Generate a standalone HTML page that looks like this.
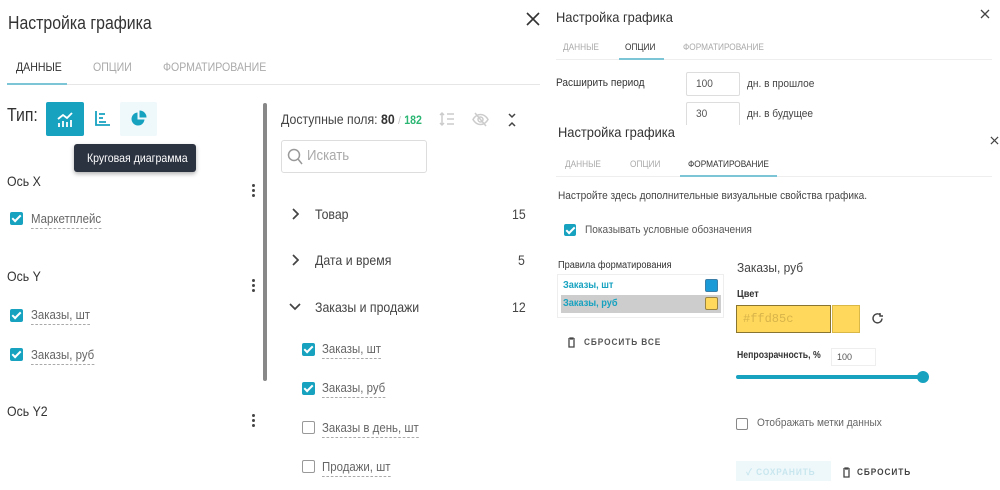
<!DOCTYPE html>
<html><head><meta charset="utf-8">
<style>
*{margin:0;padding:0;box-sizing:border-box}
body{width:1000px;height:490px;background:#fff;position:relative;overflow:hidden;font-family:"Liberation Sans","Noto Sans CJK SC",sans-serif;color:#333}
.a{position:absolute;white-space:nowrap;line-height:1}
.cb{position:absolute;width:13px;height:13px;border-radius:2px;background:#17a2c0}
.cb::after{content:"";position:absolute;left:4px;top:1px;width:3px;height:7px;border:solid #fff;border-width:0 2px 2px 0;transform:rotate(45deg)}
.ub{position:absolute;width:13px;height:13px;border-radius:2px;border:1.5px solid #999;background:#fff}
.dl{border-bottom:1px dashed #aaa;padding-bottom:3px;color:#666}
.dots{position:absolute;width:3px}
.dots i{display:block;width:3px;height:3px;border-radius:50%;background:#444;margin-bottom:2px}
.sx{transform:scaleX(.88);transform-origin:left center}
.sr{transform:scaleX(.92);transform-origin:left center}
</style></head><body>

<!-- LEFT PANEL -->
<div class="a sx" style="left:8px;top:14px;font-size:18px;color:#333">Настройка графика</div>
<svg class="a" style="left:526px;top:12px" width="14" height="14" viewBox="0 0 14 14" stroke="#333" stroke-width="1.6"><path d="M1 1l12 12M13 1L1 13"/></svg>
<div class="a sx" style="left:16px;top:61px;font-size:12px;color:#333">ДАННЫЕ</div>
<div class="a sx" style="left:93px;top:61px;font-size:12px;color:#aaa">ОПЦИИ</div>
<div class="a sx" style="left:163px;top:61px;font-size:12px;color:#aaa">ФОРМАТИРОВАНИЕ</div>
<div class="a" style="left:7px;top:84px;width:533px;height:1px;background:#e6e6e6"></div>
<div class="a" style="left:7px;top:83px;width:60px;height:2px;background:#7cc5d6"></div>

<div class="a sx" style="left:7px;top:106px;font-size:18px;color:#333">Тип:</div>
<div class="a" style="left:46px;top:102px;width:38px;height:34px;background:#17a2c0;border-radius:2px"></div>
<svg class="a" style="left:56px;top:110px" width="18" height="18" viewBox="0 0 18 18" fill="none" stroke="#fff" stroke-width="1.8"><path d="M2 9l5-4 4 3 5-5"/><path d="M3 17v-4M7 17v-6M11 17v-5M15 17v-7"/></svg>
<svg class="a" style="left:94px;top:110px" width="17" height="17" viewBox="0 0 17 17" fill="none" stroke="#17a2c0" stroke-width="1.8"><path d="M2 1v14h14"/><path d="M5 4h6M5 8h4M5 12h7"/></svg>
<div class="a" style="left:120px;top:102px;width:37px;height:34px;background:#eff8fb;border-radius:2px"></div>
<svg class="a" style="left:130px;top:110px" width="17" height="17" viewBox="0 0 17 17"><path d="M7.5 2.5A6.5 6.5 0 1 0 14.5 9.5H7.5z" fill="#17a2c0"/><path d="M9.5 0.5V7.5H16.5A7 7 0 0 0 9.5 0.5z" fill="#17a2c0"/></svg>
<div class="a" style="left:74px;top:144px;width:122px;height:28px;background:#2b3240;border-radius:3px;box-shadow:0 2px 4px rgba(0,0,0,.3)"></div>
<div class="a sx" style="left:87px;top:152px;font-size:12px;color:#fff">Круговая диаграмма</div>

<div class="a sx" style="left:7px;top:174px;font-size:14px">Ось X</div>
<div class="dots" style="left:252px;top:184px"><i></i><i></i><i></i></div>
<div class="cb" style="left:10px;top:212px"></div>
<div class="a sx dl" style="left:31px;top:212px;font-size:13px">Маркетплейс</div>

<div class="a sx" style="left:7px;top:269px;font-size:14px">Ось Y</div>
<div class="dots" style="left:252px;top:279px"><i></i><i></i><i></i></div>
<div class="cb" style="left:10px;top:309px"></div>
<div class="a sx dl" style="left:31px;top:308px;font-size:13px">Заказы, шт</div>
<div class="cb" style="left:10px;top:348px"></div>
<div class="a sx dl" style="left:31px;top:348px;font-size:13px">Заказы, руб</div>

<div class="a sx" style="left:7px;top:404px;font-size:14px">Ось Y2</div>
<div class="dots" style="left:252px;top:414px"><i></i><i></i><i></i></div>

<div class="a" style="left:263px;top:103px;width:4px;height:278px;background:#888;border-radius:2px"></div>

<div class="a sx" style="left:281px;top:112px;font-size:14px;color:#444">Доступные поля: <b style="color:#333">80</b> <span style="color:#bbb;font-size:11px">/</span> <b style="color:#2bb673;font-size:12px">182</b></div>
<svg class="a" style="left:439px;top:111px" width="16" height="16" viewBox="0 0 16 16" fill="none" stroke="#ccc" stroke-width="1.5"><path d="M3 2v12M1 4l2-2 2 2M1 12l2 2 2-2M8 3h7M8 8h7M8 13h7"/></svg>
<svg class="a" style="left:472px;top:111px" width="17" height="17" viewBox="0 0 17 17" fill="none" stroke="#ccc" stroke-width="1.5"><path d="M1 8.5C3 5 6 3.5 8.5 3.5S14 5 16 8.5C14 12 11 13.5 8.5 13.5S3 12 1 8.5z"/><circle cx="8.5" cy="8.5" r="2.5"/><path d="M3 2l11 13"/></svg>
<svg class="a" style="left:507px;top:112px" width="10" height="16" viewBox="0 0 10 16" fill="none" stroke="#444" stroke-width="1.5"><path d="M2 2l3 3 3-3M2 14l3-3 3 3"/></svg>
<div class="a" style="left:281px;top:140px;width:146px;height:33px;border:1px solid #ddd;border-radius:3px"></div>
<svg class="a" style="left:287px;top:148px" width="16" height="17" viewBox="0 0 16 17" fill="none" stroke="#999" stroke-width="1.5"><circle cx="7" cy="7" r="5.5"/><path d="M11 11l4 5"/></svg>
<div class="a sx" style="left:307px;top:148px;font-size:15px;color:#aaa">Искать</div>

<svg class="a" style="left:291px;top:208px" width="8" height="12" viewBox="0 0 8 12" fill="none" stroke="#444" stroke-width="1.7"><path d="M2 1l5 5-5 5"/></svg>
<div class="a sx" style="left:315px;top:207px;font-size:14px;color:#444">Товар</div>
<div class="a sx" style="left:512px;top:207px;font-size:14px;color:#444">15</div>
<svg class="a" style="left:291px;top:254px" width="8" height="12" viewBox="0 0 8 12" fill="none" stroke="#444" stroke-width="1.7"><path d="M2 1l5 5-5 5"/></svg>
<div class="a sx" style="left:315px;top:253px;font-size:14px;color:#444">Дата и время</div>
<div class="a sx" style="left:518px;top:253px;font-size:14px;color:#444">5</div>
<svg class="a" style="left:289px;top:303px" width="12" height="8" viewBox="0 0 12 8" fill="none" stroke="#444" stroke-width="1.7"><path d="M1 1l5 5 5-5"/></svg>
<div class="a sx" style="left:315px;top:300px;font-size:14px;color:#444">Заказы и продажи</div>
<div class="a sx" style="left:512px;top:300px;font-size:14px;color:#444">12</div>

<div class="cb" style="left:302px;top:343px"></div>
<div class="a sx dl" style="left:322px;top:342px;font-size:13px">Заказы, шт</div>
<div class="cb" style="left:302px;top:382px"></div>
<div class="a sx dl" style="left:322px;top:381px;font-size:13px">Заказы, руб</div>
<div class="ub" style="left:302px;top:421px"></div>
<div class="a sx dl" style="left:322px;top:421px;font-size:13px">Заказы в день, шт</div>
<div class="ub" style="left:302px;top:460px"></div>
<div class="a sx dl" style="left:322px;top:460px;font-size:13px">Продажи, шт</div>

<!-- RIGHT TOP PANEL -->
<div class="a sr" style="left:556px;top:10px;font-size:14px;color:#333">Настройка графика</div>
<svg class="a" style="left:980px;top:9px" width="10" height="10" viewBox="0 0 10 10" stroke="#444" stroke-width="1.3"><path d="M1 1l8 8M9 1L1 9"/></svg>
<div class="a sr" style="left:563px;top:43px;font-size:9px;color:#aaa">ДАННЫЕ</div>
<div class="a sr" style="left:625px;top:43px;font-size:9px;color:#333">ОПЦИИ</div>
<div class="a sr" style="left:683px;top:43px;font-size:9px;color:#aaa">ФОРМАТИРОВАНИЕ</div>
<div class="a" style="left:556px;top:59px;width:436px;height:1px;background:#eee"></div>
<div class="a" style="left:619px;top:58px;width:45px;height:2px;background:#7cc5d6"></div>
<div class="a sr" style="left:556px;top:78px;font-size:11px;color:#333">Расширить период</div>
<div class="a" style="left:686px;top:72px;width:54px;height:24px;border:1px solid #ddd;border-radius:2px"></div>
<div class="a sr" style="left:696px;top:79px;font-size:11px;color:#555">100</div>
<div class="a sr" style="left:747px;top:79px;font-size:11px;color:#444">дн. в прошлое</div>
<div class="a" style="left:686px;top:102px;width:54px;height:30px;border:1px solid #ddd;border-radius:2px"></div>
<div class="a sr" style="left:696px;top:109px;font-size:11px;color:#555">30</div>
<div class="a sr" style="left:747px;top:109px;font-size:11px;color:#444">дн. в будущее</div>

<!-- RIGHT BOTTOM PANEL -->
<div class="a" style="left:548px;top:125px;width:452px;height:365px;background:#fff"></div>
<div class="a sr" style="left:558px;top:125px;font-size:14px;color:#333">Настройка графика</div>
<svg class="a" style="left:990px;top:136px" width="9" height="9" viewBox="0 0 10 10" stroke="#444" stroke-width="1.3"><path d="M1 1l8 8M9 1L1 9"/></svg>
<div class="a sr" style="left:565px;top:160px;font-size:9px;color:#aaa">ДАННЫЕ</div>
<div class="a sr" style="left:630px;top:160px;font-size:9px;color:#aaa">ОПЦИИ</div>
<div class="a sr" style="left:688px;top:160px;font-size:9px;color:#333">ФОРМАТИРОВАНИЕ</div>
<div class="a" style="left:556px;top:176px;width:436px;height:1px;background:#eee"></div>
<div class="a" style="left:680px;top:175px;width:97px;height:2px;background:#7cc5d6"></div>
<div class="a sr" style="left:558px;top:191px;font-size:11px;color:#444">Настройте здесь дополнительные визуальные свойства графика.</div>
<div class="cb" style="left:564px;top:224px;width:12px;height:12px"></div>
<div class="a sr" style="left:585px;top:225px;font-size:11px;color:#555">Показывать условные обозначения</div>

<div class="a sr" style="left:558px;top:261px;font-size:10px;color:#333">Правила форматирования</div>
<div class="a" style="left:557px;top:274px;width:167px;height:44px;border:1px solid #eee"></div>
<div class="a sr" style="left:563px;top:281px;font-size:10px;font-weight:bold;color:#17a2c0">Заказы, шт</div>
<div class="a" style="left:705px;top:279px;width:13px;height:13px;background:#1a9ad6;border-radius:2px;border:1px solid #3b7fa8"></div>
<div class="a" style="left:561px;top:295px;width:160px;height:18px;background:#cdcdcd"></div>
<div class="a sr" style="left:563px;top:299px;font-size:10px;font-weight:bold;color:#17a2c0">Заказы, руб</div>
<div class="a" style="left:705px;top:297px;width:13px;height:13px;background:#ffd85c;border-radius:2px;border:1px solid #9a8440"></div>
<svg class="a" style="left:567px;top:337px" width="9" height="11" viewBox="0 0 9 11" fill="none" stroke="#444" stroke-width="1.3"><path d="M1 2h7M3 2V1h3v1M2 3v7h5V3"/></svg>
<div class="a sr" style="left:584px;top:338px;font-size:9px;font-weight:bold;letter-spacing:1px;color:#555">СБРОСИТЬ ВСЕ</div>

<div class="a sr" style="left:737px;top:261px;font-size:13px;color:#444">Заказы, руб</div>
<div class="a sr" style="left:737px;top:290px;font-size:10px;font-weight:bold;color:#333">Цвет</div>
<div class="a" style="left:736px;top:305px;width:95px;height:28px;background:#ffd85c;border:1px solid #8a7530"></div>
<div class="a" style="left:743px;top:313px;font-size:12px;font-family:'Liberation Mono',monospace;color:#d8b44a">#ffd85c</div>
<div class="a" style="left:832px;top:305px;width:28px;height:28px;background:#ffd85c;border:1px solid #d9b848"></div>
<svg class="a" style="left:871px;top:312px" width="13" height="13" viewBox="0 0 13 13" fill="none" stroke="#444" stroke-width="1.4"><path d="M11 6.5A4.5 4.5 0 1 1 9.5 3"/><path d="M9 1v3h3" /></svg>
<div class="a" style="left:737px;top:351px;font-size:10px;font-weight:bold;color:#333;transform:scaleX(.87);transform-origin:left center">Непрозрачность, %</div>
<div class="a" style="left:831px;top:348px;width:45px;height:18px;border:1px solid #eee"></div>
<div class="a" style="left:837px;top:353px;font-size:9px;color:#555">100</div>
<div class="a" style="left:736px;top:375px;width:187px;height:4px;background:#17a2c0;border-radius:2px"></div>
<div class="a" style="left:917px;top:371px;width:12px;height:12px;background:#17a2c0;border-radius:50%"></div>
<div class="ub" style="left:736px;top:418px;width:12px;height:12px;border-color:#888"></div>
<div class="a sr" style="left:757px;top:418px;font-size:11px;color:#666">Отображать метки данных</div>
<div class="a" style="left:736px;top:461px;width:95px;height:20px;background:#eef8fb"></div>
<div class="a sr" style="left:746px;top:468px;font-size:9px;font-weight:bold;letter-spacing:1px;color:#c8e6ee">✓ СОХРАНИТЬ</div>
<svg class="a" style="left:842px;top:467px" width="9" height="11" viewBox="0 0 9 11" fill="none" stroke="#444" stroke-width="1.3"><path d="M1 2h7M3 2V1h3v1M2 3v7h5V3"/></svg>
<div class="a sr" style="left:857px;top:468px;font-size:9px;font-weight:bold;letter-spacing:1px;color:#444">СБРОСИТЬ</div>
</body></html>
